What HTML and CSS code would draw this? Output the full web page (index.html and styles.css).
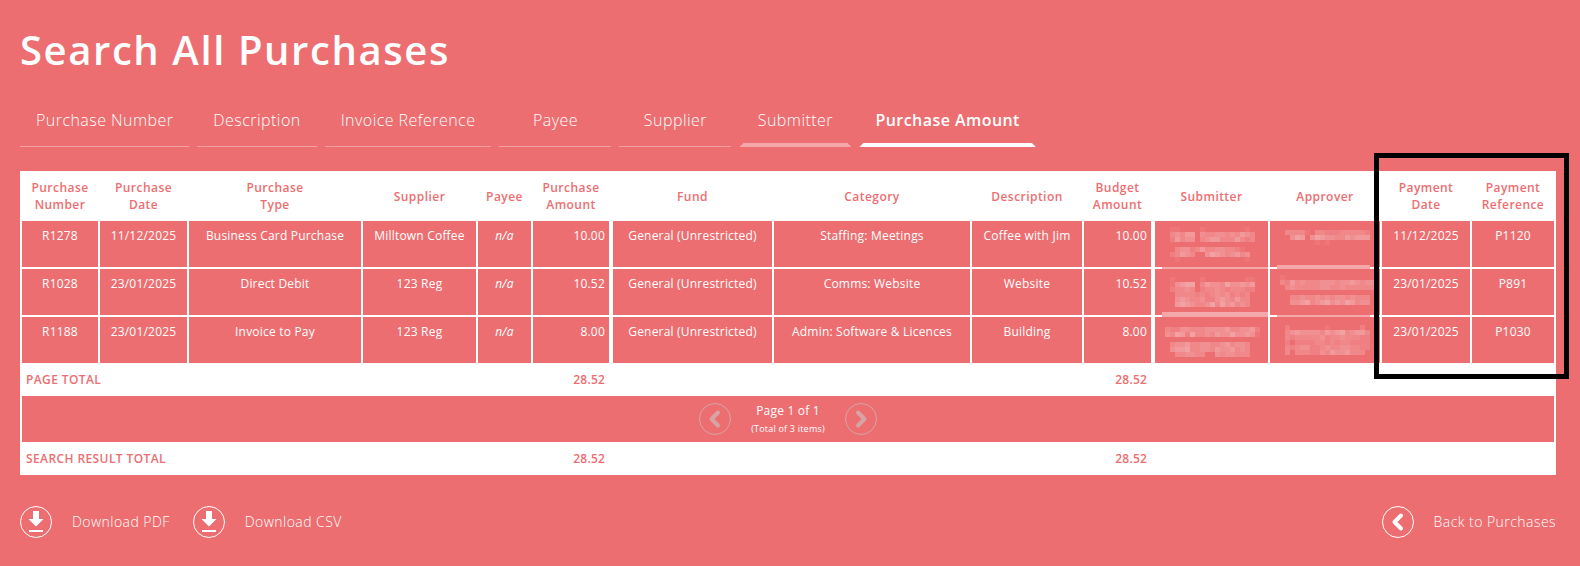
FILE: index.html
```html
<!DOCTYPE html>
<html lang="en">
<head>
  <meta charset="UTF-8">
  <meta name="viewport" content="width=device-width, initial-scale=1.0">
  <title>Search All Purchases</title>
  <link rel="stylesheet" href="styles.css">
</head>
<body>
  <h1 class="page-title">Search All Purchases</h1>

  <!-- Search tabs -->
  <nav class="tabs">
    <a class="tab">Purchase Number</a>
    <a class="tab">Description</a>
    <a class="tab">Invoice Reference</a>
    <a class="tab">Payee</a>
    <a class="tab">Supplier</a>
    <a class="tab tab-hover">Submitter</a>
    <a class="tab tab-active">Purchase Amount</a>
  </nav>

  <table class="results">
    <colgroup>
      <col class="c76"><col class="c87"><col class="c172"><col class="c113"><col class="c53"><col class="c76"><col class="c161">
      <col class="c196"><col class="c110"><col class="c67"><col class="c115"><col class="c110"><col class="c88"><col class="c82">
    </colgroup>
    <thead>
      <tr>
        <th>Purchase<br>Number</th>
        <th>Purchase<br>Date</th>
        <th>Purchase<br>Type</th>
        <th>Supplier</th>
        <th>Payee</th>
        <th>Purchase<br>Amount</th>
        <th class="group-start">Fund</th>
        <th>Category</th>
        <th>Description</th>
        <th>Budget<br>Amount</th>
        <th class="group-start">Submitter</th>
        <th>Approver</th>
        <th>Payment<br>Date</th>
        <th>Payment<br>Reference</th>
      </tr>
    </thead>
    <tbody>
      <tr>
        <td>R1278</td>
        <td>11/12/2025</td>
        <td>Business Card Purchase</td>
        <td>Milltown Coffee</td>
        <td class="italic">n/a</td>
        <td class="num">10.00</td>
        <td class="group-start">General (Unrestricted)</td>
        <td>Staffing: Meetings</td>
        <td>Coffee with Jim</td>
        <td class="num">10.00</td>
        <td class="group-start redacted" data-mosaic="sub1"></td>
        <td class="redacted" data-mosaic="app1"></td>
        <td>11/12/2025</td>
        <td>P1120</td>
      </tr>
      <tr>
        <td>R1028</td>
        <td>23/01/2025</td>
        <td>Direct Debit</td>
        <td>123 Reg</td>
        <td class="italic">n/a</td>
        <td class="num">10.52</td>
        <td class="group-start">General (Unrestricted)</td>
        <td>Comms: Website</td>
        <td>Website</td>
        <td class="num">10.52</td>
        <td class="group-start redacted" data-mosaic="sub2"></td>
        <td class="redacted" data-mosaic="app2"></td>
        <td>23/01/2025</td>
        <td>P891</td>
      </tr>
      <tr>
        <td>R1188</td>
        <td>23/01/2025</td>
        <td>Invoice to Pay</td>
        <td>123 Reg</td>
        <td class="italic">n/a</td>
        <td class="num">8.00</td>
        <td class="group-start">General (Unrestricted)</td>
        <td>Admin: Software &amp; Licences</td>
        <td>Building</td>
        <td class="num">8.00</td>
        <td class="group-start redacted" data-mosaic="sub3"></td>
        <td class="redacted" data-mosaic="app3"></td>
        <td>23/01/2025</td>
        <td>P1030</td>
      </tr>
    </tbody>
    <tbody>
      <tr class="total">
        <td colspan="5" class="total-label">Page Total</td>
        <td class="num">28.52</td>
        <td colspan="3"></td>
        <td class="num">28.52</td>
        <td colspan="4"></td>
      </tr>
      <tr>
        <td colspan="14" class="pager-cell">
          <div class="pager">
            <svg class="circle-icon disabled" viewBox="0 0 32 32"><circle cx="16" cy="16" r="15.5"/><path class="chevron" d="M19 9.5 L12.5 16 L19 22.5"/></svg>
            <div class="pager-text">
              <div>Page 1 of 1</div>
              <small>(Total of 3 items)</small>
            </div>
            <svg class="circle-icon disabled" viewBox="0 0 32 32"><circle cx="16" cy="16" r="15.5"/><path class="chevron" d="M13 9.5 L19.5 16 L13 22.5"/></svg>
          </div>
        </td>
      </tr>
      <tr class="total">
        <td colspan="5" class="total-label">Search Result Total</td>
        <td class="num">28.52</td>
        <td colspan="3"></td>
        <td class="num">28.52</td>
        <td colspan="4"></td>
      </tr>
    </tbody>
  </table>

  <!-- Bottom links -->
  <div class="actions">
    <div class="actions-left">
      <a class="action">
        <svg class="circle-icon" viewBox="0 0 32 32"><circle cx="16" cy="16" r="15.5"/><path class="arrow" d="M13 5 H19 V13 H23.5 L16 20.5 L8.500 13 H13 Z"/><rect class="arrow" x="9" y="24" width="14" height="2"/></svg>
        <span class="action-label">Download PDF</span>
      </a>
      <a class="action">
        <svg class="circle-icon" viewBox="0 0 32 32"><circle cx="16" cy="16" r="15.5"/><path class="arrow" d="M13 5 H19 V13 H23.5 L16 20.5 L8.500 13 H13 Z"/><rect class="arrow" x="9" y="24" width="14" height="2"/></svg>
        <span class="action-label">Download CSV</span>
      </a>
    </div>
    <a class="action">
      <svg class="circle-icon" viewBox="0 0 32 32"><circle cx="16" cy="16" r="15.5"/><path class="chevron" d="M19 9.500 L12.500 16 L19 22.500"/></svg>
      <span class="action-label">Back to Purchases</span>
    </a>
  </div>

  <!-- Black highlight box drawn over the payment columns -->
  <div class="highlight"></div>

  <script src="mosaic.js"></script>
</body>
</html>
```

FILE: styles.css
```css
/* General Reset */
* {
  margin: 0;
  padding: 0;
  box-sizing: border-box;
}

body {
  font-family: "Open Sans", "Liberation Sans", sans-serif;
  background: #ed6e71;
  color: #fff;
  padding: 0 24px 0 20px;
  width: 1580px;
  height: 566px;
  overflow: hidden;
  position: relative;
}

.page-title {
  font-size: 40px;
  font-weight: 600;
  line-height: 54px;
  letter-spacing: 1.6px;
  padding-top: 23px;
  height: 77px;
}

/* Tabs */
.tabs {
  display: flex;
  gap: 8px;
  margin-top: 25px;
}

.tab {
  position: relative;
  min-width: 112px;
  height: 45px;
  padding: 7px 16px 0;
  font-size: 16px;
  font-weight: 300;
  line-height: 22px;
  letter-spacing: 0.45px;
  text-align: center;
  border-bottom: 1px solid rgba(255, 255, 255, 0.35);
}

.tab-hover,
.tab-active {
  border-bottom-color: transparent;
}

.tab-hover::after,
.tab-active::after {
  content: "";
  position: absolute;
  left: 0;
  right: 0;
  bottom: -1px;
  height: 4px;
  background: #fff;
  clip-path: polygon(4px 0, calc(100% - 4px) 0, 100% 100%, 0 100%);
}

.tab-hover::after {
  background: rgba(255, 255, 255, 0.4);
}

.tab-active {
  font-weight: 600;
}

/* Results table */
.results {
  width: 1536px;
  margin-top: 24px;
  table-layout: fixed;
  border-collapse: separate;
  border-spacing: 2px;
  background: #fff;
}

.c53 { width: 53px; }
.c67 { width: 67px; }
.c76 { width: 76px; }
.c82 { width: 82px; }
.c87 { width: 87px; }
.c88 { width: 88px; }
.c110 { width: 110px; }
.c113 { width: 113px; }
.c115 { width: 115px; }
.c161 { width: 161px; }
.c172 { width: 172px; }
.c196 { width: 196px; }

.results th {
  height: 46px;
  background: #fff;
  color: #ed6e71;
  font-size: 12px;
  font-weight: 600;
  line-height: 17px;
  letter-spacing: 0.45px;
}

.results td {
  height: 46px;
  padding: 6px 4px 0;
  background: #ed6e71;
  font-size: 12px;
  font-weight: 400;
  line-height: 17px;
  letter-spacing: 0.2px;
  text-align: center;
  vertical-align: top;
}

.results .group-start {
  border-left: 2px solid #fff;
}

.results .num {
  text-align: right;
}

.italic {
  font-style: italic;
}

.redacted {
  position: relative;
}

.mosaic {
  position: absolute;
  left: 0;
  top: 0;
  overflow: visible;
}

.results .total td {
  height: 29px;
  padding: 6px 4px 0;
  background: #fff;
  color: #ed6e71;
  font-weight: 600;
}

.results .total .total-label {
  text-align: left;
  text-transform: uppercase;
  letter-spacing: 0.4px;
}

.results .pager-cell {
  padding: 0;
}

.pager {
  display: flex;
  justify-content: center;
  align-items: center;
  gap: 12px;
  height: 46px;
}

.pager-text {
  width: 90px;
  padding-top: 2px;
  text-align: center;
  line-height: 14px;
}

.pager-text small {
  display: block;
  margin-top: 2px;
  font-size: 9px;
  line-height: 17px;
  letter-spacing: 0.2px;
}

/* Round icons */
.circle-icon {
  width: 32px;
  height: 32px;
  flex: none;
}

.circle-icon circle {
  fill: none;
  stroke: #fff;
  stroke-width: 1;
}

.circle-icon .arrow {
  fill: #fff;
}

.circle-icon .chevron {
  fill: none;
  stroke: #fff;
  stroke-width: 4;
  stroke-linecap: round;
  stroke-linejoin: round;
}

.circle-icon.disabled {
  opacity: 0.6;
}

.circle-icon.disabled circle,
.circle-icon.disabled .chevron {
  stroke: #c8c8c8;
}

/* Bottom links */
.actions {
  display: flex;
  justify-content: space-between;
  margin-top: 31px;
}

.actions-left {
  display: flex;
  gap: 23px;
}

.action {
  display: flex;
  align-items: center;
  gap: 20px;
  font-size: 14px;
  font-weight: 300;
  letter-spacing: 0.45px;
}

.action-label {
  padding-bottom: 2px;
}

.highlight {
  position: absolute;
  left: 1374px;
  top: 153px;
  width: 195px;
  height: 226px;
  border: 5px solid #000;
}
```

FILE: mosaic.js
```js
// Pixelated names in the submitter and approver columns.
// Each digit is one 5px block, its value is how light the block is.
const mosaics = {
  sub1: { x: 15, y: 6, bar: [7, 46, 106], rows: [
    "11000010000000010",
    "34355043344343543",
    "25344034553335323",
    "00000000000000000",
    "03442353344332100",
    "23543004654345340",
    "01000000000000010"
  ] },
  sub2: { x: 15, y: 8, bar: [7, 43, 106], rows: [
    "10000010000000011",
    "14566035443644545",
    "23343023343233322",
    "03333232343423230",
    "04543342245435330",
    "05654334636453430"
  ] },
  sub3: { x: 10, y: 10, rows: [
    "3224433344445334452",
    "4365263343544644541",
    "0000000000000000000",
    "0344533443345344300",
    "0455633443544534300",
    "0033443300434433300"
  ] },
  app1: { x: 15, y: 9, bar: [7, 44, 93], rows: [
    "33331033222333332",
    "04650465443354555",
    "00000010100000000"
  ] },
  app2: { x: 10, y: 6, bar: [7, 46, 93], rows: [
    "1000000000000000000",
    "3253433344434454344",
    "0343333344334333333",
    "0000000000000000000",
    "0033433434344343330",
    "0044563456454653440",
    "0000000000000000000"
  ] },
  app3: { x: 15, y: 8, rows: [
    "20000000100000020",
    "34544443545634553",
    "32333334233433322",
    "20222233232332222",
    "32344223433443322",
    "30333224354453330"
  ] }
};

document.querySelectorAll("[data-mosaic]").forEach(cell => {
  const m = mosaics[cell.dataset.mosaic];
  let rects = "";
  m.rows.forEach((row, r) => {
    row.split("").forEach((shade, c) => {
      if (shade === "0") return;
      rects += `<rect x="${m.x + c * 5}" y="${m.y + r * 5}" width="5" height="5" fill="#fff" fill-opacity="${shade * 0.06}"/>`;
    });
  });
  if (m.bar) {
    rects += `<rect x="${m.bar[0]}" y="${m.bar[1]}" width="${m.bar[2]}" height="5" fill="#f5a8aa"/>`;
  }
  cell.innerHTML = `<svg class="mosaic" width="113" height="46">${rects}</svg>`;
});
```
